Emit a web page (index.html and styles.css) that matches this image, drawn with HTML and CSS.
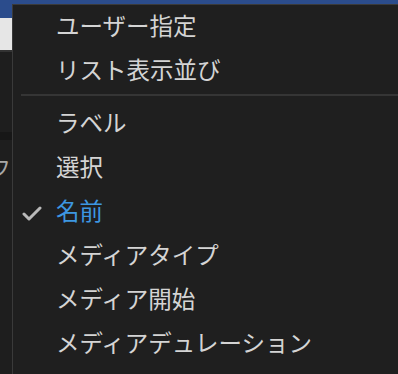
FILE: index.html
```html
<!DOCTYPE html>
<html lang="ja">
<head>
    <meta charset="UTF-8">
    <meta name="viewport" content="width=device-width, initial-scale=1.0">
    <title>表示メニュー</title>
    <link rel="stylesheet" href="styles.css">
</head>
<body>
    <div class="window">
        <div class="titlebar"></div>
        <div class="sidebar">
            <div class="sidebar-field"></div>
            <div class="sidebar-gap"></div>
            <div class="sidebar-band"></div>
            <div class="sidebar-label">フ</div>
        </div>
    </div>

    <div class="menu">
        <div class="menu-item">ユーザー指定</div>
        <div class="menu-item">リスト表示並び</div>
        <div class="menu-separator"></div>
        <div class="menu-item">ラベル</div>
        <div class="menu-item">選択</div>
        <div class="menu-item checked">
            <svg class="check" width="20" height="16" viewBox="0 0 20 16">
                <polyline points="2,8 7,13 18,2" fill="none" stroke="#b9b9b9" stroke-width="3" stroke-linecap="round" stroke-linejoin="round"/>
            </svg>
            名前
        </div>
        <div class="menu-item">メディアタイプ</div>
        <div class="menu-item">メディア開始</div>
        <div class="menu-item">メディアデュレーション</div>
    </div>
</body>
</html>
```

FILE: styles.css
```css
body {
    margin: 0;
    background-color: #1e1e1e;
    font-family: "Noto Sans CJK JP", "Noto Sans", sans-serif;
    overflow: hidden;
    width: 398px;
    height: 374px;
    position: relative;
}
.window {
    height: 100%;
}
.titlebar {
    height: 18px;
    background-color: #2b4c8c;
}
.sidebar {
    width: 12px;
    overflow: hidden;
}
.sidebar-field {
    height: 32px;
    background-color: #e6e6e6;
    border-bottom: 2px solid #333;
}
.sidebar-gap {
    height: 80px;
}
.sidebar-band {
    height: 8px;
    background-color: #171717;
}
.sidebar-label {
    margin-left: -11px;
    margin-top: 14px;
    font-size: 22px;
    line-height: 24px;
    color: #a8a8a8;
}
.menu {
    position: absolute;
    left: 12px;
    top: 4px;
    right: 0;
    bottom: 0;
    overflow: hidden;
    background-color: #1f1f1f;
    border: 1px solid #3a3a3a;
    border-right: none;
    border-bottom: none;
}
.menu-item {
    position: relative;
    height: 44px;
    line-height: 44px;
    padding-left: 43px;
    font-size: 23.5px;
    color: #d4d4d4;
    white-space: nowrap;
    margin-top: -2px;
    margin-bottom: 2px;
}
.menu-separator {
    height: 2px;
    margin: 3px 0 6px 8px;
    background-color: #353535;
}
.menu-item.checked {
    color: #3d97e2;
}
.check {
    position: absolute;
    left: 9px;
    top: 18px;
}
```
